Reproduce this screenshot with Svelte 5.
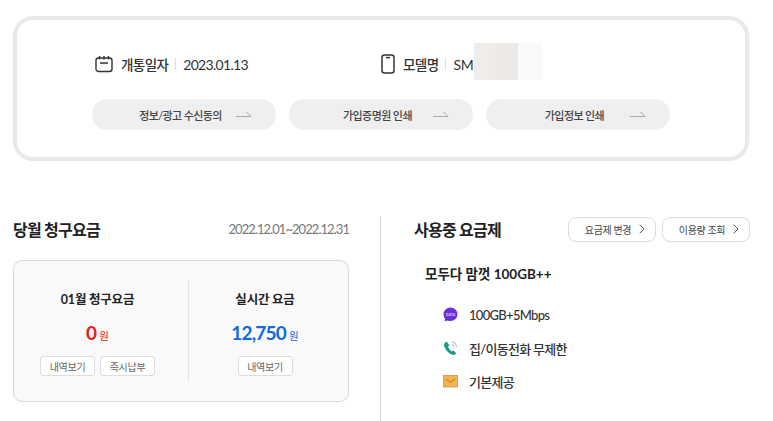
<script>
  const pills = ['정보/광고 수신동의', '가입증명원 인쇄', '가입정보 인쇄'];
  const features = [
    { icon: 'data', label: '100GB+5Mbps' },
    { icon: 'call', label: '집/이동전화 무제한' },
    { icon: 'mail', label: '기본제공' }
  ];
</script>

<div class="page">
  <section class="info-card">
    <div class="info-row">
      <div class="info-item date">
        <svg width="18" height="18" viewBox="0 0 18 18" fill="none" stroke="#333" stroke-width="1.4">
          <rect x="1" y="3" width="16" height="13.5" rx="2.5" />
          <path d="M4.5 1v3.5M9 1v3.5M13.5 1v3.5M5 8h8" />
        </svg>
        <span class="info-label">개통일자</span>
        <span class="info-sep"></span>
        <span class="info-val">2023.01.13</span>
      </div>
      <div class="info-item model">
        <svg width="14" height="20" viewBox="0 0 14 20" fill="none" stroke="#333" stroke-width="1.5">
          <rect x="1" y="1" width="12" height="18" rx="2.5" />
          <path d="M5 3.6h4" />
        </svg>
        <span class="info-label">모델명</span>
        <span class="info-sep"></span>
        <span class="info-val sm">SM-</span>
        <div class="redact">
          <span class="r1"></span><span class="r2"></span><span class="r3"></span>
        </div>
      </div>
    </div>
    <div class="pill-row">
      {#each pills as pill}
        <button class="pill">
          <span class="pill-text">{pill}</span>
          <svg width="16" height="7" viewBox="0 0 16 7" fill="none" stroke="#aaa" stroke-width="1">
            <path d="M0 5.500h15L10.500 1" />
          </svg>
        </button>
      {/each}
    </div>
  </section>

  <div class="bottom">
    <section class="bill">
      <div class="head">
        <h2>당월 청구요금</h2>
        <span class="period">2022.12.01~2022.12.31</span>
      </div>
      <div class="bill-box">
        <div class="bill-col">
          <div class="bill-title">01월 청구요금</div>
          <div class="amount red"><b>0</b><span>원</span></div>
          <div class="bill-btns">
            <button class="mini">내역보기</button>
            <button class="mini">즉시납부</button>
          </div>
        </div>
        <div class="bill-col second">
          <div class="bill-title">실시간 요금</div>
          <div class="amount blue"><b>12,750</b><span>원</span></div>
          <div class="bill-btns">
            <button class="mini">내역보기</button>
          </div>
        </div>
      </div>
    </section>

    <section class="plan">
      <div class="head plan-head">
        <h2>사용중 요금제</h2>
        <div class="plan-btns">
          <button class="outline">요금제 변경
            <svg width="6" height="10" viewBox="0 0 6 10" fill="none" stroke="#555" stroke-width="1"><path d="M.7 .7 5 5 .7 9.300" /></svg>
          </button>
          <button class="outline">이용량 조회
            <svg width="6" height="10" viewBox="0 0 6 10" fill="none" stroke="#555" stroke-width="1"><path d="M.7 .7 5 5 .7 9.300" /></svg>
          </button>
        </div>
      </div>
      <div class="plan-name">모두다 맘껏 100GB++</div>
      <ul class="features">
        {#each features as f}
          <li>
            <span class="f-icon">
              {#if f.icon === 'data'}
                <svg width="15" height="15" viewBox="0 0 15 15">
                  <path d="M7.500 .5a7 6.800 0 0 1 7 6.800 7 6.800 0 0 1-7 6.800c-1 0-2-.1-3-.5L1.700 14.300 2 11.700A6.800 6.800 0 0 1 .5 7.300 7 6.800 0 0 1 7.500 .5z" fill="#6b2fd6" />
                  <text x="7.500" y="8.800" text-anchor="middle" class="data-text">DATA</text>
                </svg>
              {:else if f.icon === 'call'}
                <svg width="15" height="16" viewBox="0 0 15 16" fill="none">
                  <path d="M3.600 1.500C1.300 2.700.4 4.600 1.500 7c1.200 2.800 3.700 5.900 6.800 7.300 2.200 1 3.900.4 5-.9l-2.700-2.900-1.900.9C7 10.500 5.600 8.500 5 6.800l1.400-1.400z" fill="#119c84" />
                  <path d="M8.500 4.400a3.300 3.300 0 0 1 2.700 3M9 1.700a6 6 0 0 1 4.800 5" stroke="#9a9a9a" stroke-width=".8" />
                </svg>
              {:else}
                <svg width="15" height="13" viewBox="0 0 15 13">
                  <rect x=".5" y=".5" width="14" height="11.500" fill="#f7b24d" stroke="#c98d35" stroke-width=".7" />
                  <path d="M3 4l4.500 3.500L12 4" fill="none" stroke="#8a6a30" stroke-width=".8" />
                </svg>
              {/if}
            </span>
            <span class="f-label">{f.label}</span>
          </li>
        {/each}
      </ul>
    </section>
  </div>
</div>

<style>
  :global(body) {
    background: #fff;
    font-family: Lato, "Noto Sans CJK KR", sans-serif;
    color: #222;
    overflow: hidden;
  }
  button {
    font-family: inherit;
    cursor: pointer;
  }
  .page {
    width: 773px;
    height: 421px;
    padding: 16px 23px 0 13px;
    box-sizing: border-box;
  }

  /* Top card */
  .info-card {
    box-sizing: border-box;
    width: 736px;
    height: 145px;
    border: 4px solid #e9e9e9;
    border-radius: 20px;
    padding: 32px 0 0 75px;
  }
  .info-row {
    display: flex;
    height: 24px;
    align-items: center;
  }
  .info-item {
    display: flex;
    align-items: center;
    position: relative;
    font-size: 14px;
    letter-spacing: -0.7px;
  }
  .date {
    width: 289px;
    padding-left: 3px;
    box-sizing: border-box;
  }
  .info-label {
    margin-left: 8px;
    font-weight: 500;
    color: #333;
    font-size: 13.5px;
    letter-spacing: -0.6px;
  }
  .info-sep {
    width: 1px;
    height: 12px;
    background: #ddd;
    margin: 0 7px;
  }
  .info-val {
    color: #333;
  }
  .sm {
    letter-spacing: -0.2px;
  }
  .redact {
    position: absolute;
    left: 93px;
    top: -11px;
    display: flex;
    height: 37px;
  }
  .redact span {
    display: block;
    height: 100%;
  }
  .r1 { width: 21px; background: #efecea; }
  .r2 { width: 23px; background: #ece9e7; }
  .r3 { width: 24px; background: #faf9f9; }

  .pill-row {
    display: flex;
    gap: 13px;
    margin-top: 23px;
  }
  .pill {
    width: 184px;
    height: 31px;
    border: none;
    border-radius: 16px;
    background: #efefef;
    display: flex;
    align-items: center;
    padding: 0 0 0 33px;
    font-size: 11px;
    font-weight: 500;
    color: #444;
    letter-spacing: -0.6px;
  }
  .pill-text {
    width: 111px;
    text-align: center;
  }

  /* Bottom */
  .bottom {
    display: flex;
    margin-top: 55px;
    height: 205px;
  }
  .bill {
    width: 336px;
  }
  .head {
    display: flex;
    justify-content: space-between;
    align-items: center;
    height: 26px;
  }
  h2 {
    margin: 0;
    font-size: 16px;
    font-weight: 700;
    color: #222;
    letter-spacing: -0.75px;
  }
  .period {
    font-size: 13px;
    color: #777;
    letter-spacing: -0.95px;
  }
  .bill-box {
    box-sizing: border-box;
    height: 142px;
    margin-top: 18px;
    background: #f9f9f9;
    border: 1px solid #d9d9d9;
    border-radius: 9px;
    display: flex;
    padding: 19px 0;
  }
  .bill-col {
    width: 174px;
    padding: 11px 7px 0 0;
    text-align: center;
    box-sizing: border-box;
  }
  .second {
    flex: 1;
    border-left: 1px solid #e4e4e4;
  }
  .bill-title {
    font-size: 12.5px;
    font-weight: 700;
    color: #222;
    line-height: 18px;
    letter-spacing: -0.2px;
  }
  .amount {
    margin-top: 12px;
    line-height: 24px;
    display: flex;
    align-items: baseline;
    justify-content: center;
    gap: 3px;
  }
  .amount b {
    font-size: 19px;
    font-weight: 700;
    letter-spacing: -0.8px;
  }
  .amount span {
    font-size: 10.5px;
  }
  .red { color: #f01414; }
  .blue { color: #1168e0; }
  .bill-btns {
    display: flex;
    justify-content: center;
    gap: 5px;
    margin-top: 8px;
  }
  .mini {
    width: 55px;
    height: 20px;
    padding: 0;
    background: #fff;
    border: 1px solid #ddd;
    border-radius: 3px;
    font-size: 10px;
    color: #666;
    letter-spacing: -0.3px;
  }

  .plan {
    flex: 1;
    margin-left: 31px;
    border-left: 1px solid #d4d4d4;
    padding-left: 33px;
  }
  .plan-btns {
    display: flex;
    gap: 6px;
  }
  .outline {
    box-sizing: border-box;
    width: 88px;
    height: 25px;
    padding: 0 10px 0 0;
    background: #fff;
    border: 1px solid #ddd;
    border-radius: 8px;
    font-size: 10px;
    color: #444;
    display: flex;
    align-items: center;
    justify-content: flex-end;
    gap: 8px;
    letter-spacing: -0.4px;
  }
  .plan-name {
    margin: 22px 0 0 11px;
    font-size: 13.5px;
    font-weight: 700;
    line-height: 20px;
    color: #222;
  }
  .features {
    list-style: none;
    margin: 14px 0 0 29px;
    padding: 0;
  }
  .features li {
    display: flex;
    align-items: center;
    height: 33.5px;
  }
  .f-icon {
    width: 26px;
    display: flex;
  }
  .f-label {
    font-size: 13px;
    font-weight: 500;
    color: #333;
    letter-spacing: -0.7px;
  }
  .data-text {
    font-size: 3.6px;
    font-weight: 700;
    fill: #d9c8f7;
  }
</style>
